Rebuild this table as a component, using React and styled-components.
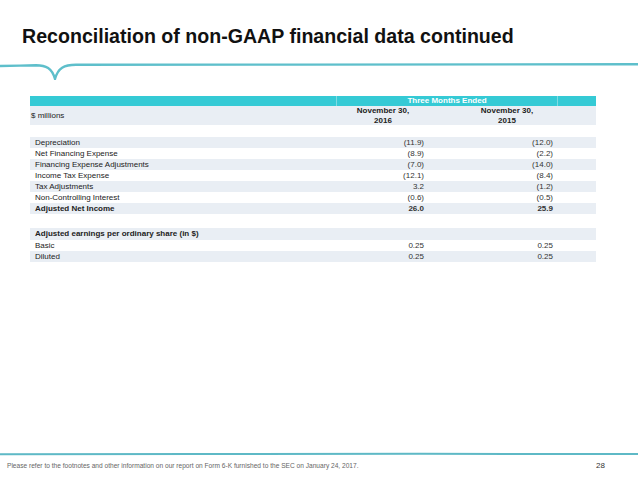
import React from "react";
import styled, { createGlobalStyle } from "styled-components";

const rows = [
    { label: "Depreciation", a: "(11.9)", b: "(12.0)", band: true },
    { label: "Net Financing Expense", a: "(8.9)", b: "(2.2)" },
    { label: "Financing Expense Adjustments", a: "(7.0)", b: "(14.0)", band: true },
    { label: "Income Tax Expense", a: "(12.1)", b: "(8.4)" },
    { label: "Tax Adjustments", a: "3.2", b: "(1.2)", band: true },
    { label: "Non-Controlling Interest", a: "(0.6)", b: "(0.5)" },
    { label: "Adjusted Net Income", a: "26.0", b: "25.9", band: true, bold: true },
];

const eps = [
    { label: "Basic", a: "0.25", b: "0.25" },
    { label: "Diluted", a: "0.25", b: "0.25", band: true },
];

export default function App() {
    return (
        <>
            <Global />
            <Page>
                <Titulo>Reconciliation of non-GAAP financial data continued</Titulo>
                <Linha width="638" height="22" viewBox="0 0 638 22">
                    <path
                        d="M0 8 L20 7.6 L36 7.2 C46 7.2 52 10 55 21 C58 10 64 6.8 76 6.8 L300 6.6 L638 6.3"
                        fill="none"
                        stroke="#5ebfcb"
                        strokeWidth="2.4"
                        strokeLinecap="round"
                    />
                </Linha>

                <Tabela>
                    <Topo>
                        <Cel />
                        <TopoTitulo>Three Months Ended</TopoTitulo>
                        <Cel />
                    </Topo>
                    <Cabecalho>
                        <Unidade>$ millions</Unidade>
                        <Data>November 30,<br />2016</Data>
                        <Cel />
                        <Data>November 30,<br />2015</Data>
                        <Cel />
                    </Cabecalho>
                    <Espaco h={12} />
                    {rows.map((r) => (
                        <Linhas key={r.label} band={r.band} bold={r.bold}>
                            <Rotulo>{r.label}</Rotulo>
                            <Valor>{r.a}</Valor>
                            <Cel />
                            <Valor pad={5}>{r.b}</Valor>
                            <Cel />
                        </Linhas>
                    ))}
                    <Espaco h={14} />
                    <Linhas band bold h={12}>
                        <Rotulo>Adjusted earnings per ordinary share (in $)</Rotulo>
                        <Cel />
                        <Cel />
                        <Cel />
                        <Cel />
                    </Linhas>
                    {eps.map((r) => (
                        <Linhas key={r.label} band={r.band}>
                            <Rotulo>{r.label}</Rotulo>
                            <Valor>{r.a}</Valor>
                            <Cel />
                            <Valor pad={5}>{r.b}</Valor>
                            <Cel />
                        </Linhas>
                    ))}
                </Tabela>

                <Rodape>
                    <LinhaRodape width="638" height="4" viewBox="0 0 638 4">
                        <path d="M0 2.2 L200 2 L420 1.8 L638 2" fill="none" stroke="#5eb9c6" strokeWidth="2" />
                    </LinhaRodape>
                    <RodapeTexto>
                        <Nota>
                            Please refer to the footnotes and other information on our report on Form 6-K furnished to the SEC on January 24, 2017.
                        </Nota>
                        <Pagina>28</Pagina>
                    </RodapeTexto>
                </Rodape>
            </Page>
        </>
    );
}

/* styles */
const Global = createGlobalStyle`
  html, body {
    margin: 0;
    padding: 0;
    background: #fff;
  }
  body {
    font-family: "Liberation Sans", Arial, sans-serif;
  }
`;

const Page = styled.div`
  width: 638px;
  height: 479px;
  display: flex;
  flex-direction: column;
  background: #fff;
  overflow: hidden;
`;

const Titulo = styled.h1`
  margin: 24px 0 0 22px;
  font-size: 19.6px;
  line-height: 24px;
  font-weight: 700;
  color: #111;
  white-space: nowrap;
`;

const Linha = styled.svg`
  display: block;
  margin-top: 10px;
`;

const Tabela = styled.div`
  margin: 16px 0 0 30px;
  width: 566px;
  display: flex;
  flex-direction: column;
  font-size: 8px;
  color: #222;
`;

const grade = `
  display: grid;
  grid-template-columns: 306px 94px 26px 102px 38px;
`;

const Topo = styled.div`
  display: grid;
  grid-template-columns: 306px 222px 38px;
  height: 10px;
  background: #35cad5;
`;

const Cel = styled.div``;

const TopoTitulo = styled.div`
  border-left: 1px solid #7fdbe2;
  border-right: 1px solid #7fdbe2;
  color: #fff;
  font-weight: 700;
  font-size: 8px;
  line-height: 10px;
  text-align: center;
`;

const Cabecalho = styled.div`
  ${grade}
  height: 19px;
  background: #e9eef4;
  align-items: center;
`;

const Unidade = styled.div`
  padding-left: 1px;
  line-height: 10px;
`;

const Data = styled.div`
  font-weight: 700;
  text-align: center;
  line-height: 10px;
  white-space: nowrap;
`;

const Espaco = styled.div`
  height: ${({ h }) => h}px;
`;

const Linhas = styled.div`
  ${grade}
  height: ${({ h }) => h || 11}px;
  align-items: center;
  background: ${({ band }) => (band ? "#e9eef4" : "transparent")};
  font-weight: ${({ bold }) => (bold ? 700 : 400)};
  line-height: 10px;
`;

const Rotulo = styled.div`
  padding-left: 5px;
  white-space: nowrap;
`;

const Valor = styled.div`
  text-align: right;
  padding-right: ${({ pad }) => (pad ?? 6)}px;
  color: #333;
`;

const Rodape = styled.div`
  margin-top: auto;
  height: 27px;
  display: flex;
  flex-direction: column;
`;

const LinhaRodape = styled.svg`
  display: block;
`;

const RodapeTexto = styled.div`
  margin-top: 5px;
  display: flex;
  align-items: center;
  justify-content: space-between;
  padding: 0 33px 0 7px;
  height: 8px;
`;

const Nota = styled.div`
  font-size: 6.6px;
  color: #666;
  white-space: nowrap;
`;

const Pagina = styled.div`
  font-size: 8px;
  color: #333;
`;
